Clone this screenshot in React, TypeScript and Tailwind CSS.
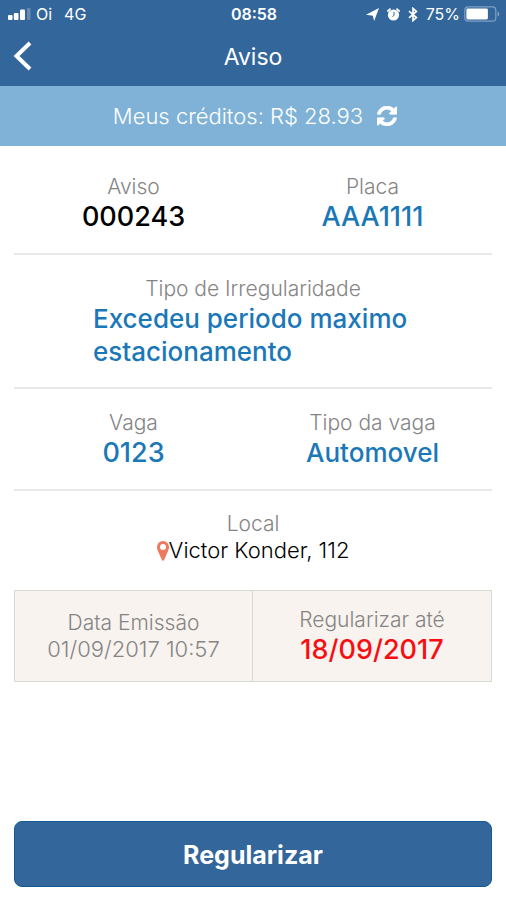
import type { ReactNode } from "react";

function SignalIcon() {
  return (
    <svg className="h-3 w-6" viewBox="0 0 24 12" fill="currentColor" aria-hidden="true">
      <rect x="0" y="7" width="4.500" height="5" rx="1" />
      <rect x="5.800" y="5" width="4.700" height="7" rx="1" />
      <rect x="12" y="1.500" width="5" height="10.500" rx="1" />
      <rect x="19" y="0" width="3.500" height="12" rx="1" opacity="0.25" />
    </svg>
  );
}

function LocationArrowIcon() {
  return (
    <svg className="h-[13px] w-[13px]" viewBox="0 0 12 12" fill="currentColor" aria-hidden="true">
      <path d="M12 0 7.500 12 6.300 7.200 0 6.200Z" />
    </svg>
  );
}

function AlarmIcon() {
  return (
    <svg className="h-[13px] w-[13px]" viewBox="0 0 13 13" aria-hidden="true">
      <circle cx="6.5" cy="7" r="5.6" fill="currentColor" />
      <path d="M.9 3 3 1.100M12.1 3 10 1.100" stroke="currentColor" strokeWidth="1.800" strokeLinecap="round" />
      <path d="M7 4v3.400L5.500 8.500" fill="none" stroke="#33669a" strokeWidth="1" />
    </svg>
  );
}

function BluetoothIcon() {
  return (
    <svg className="h-[15px] w-[10px]" viewBox="0 0 10 15" fill="none" stroke="currentColor" strokeWidth="1.700" aria-hidden="true">
      <path d="M1 4.2 8.4 10.6 5 13.6V1.4l3.4 3L1 10.8" />
    </svg>
  );
}

function BatteryIcon() {
  return (
    <svg className="h-4 w-9" viewBox="0 0 36 16" aria-hidden="true">
      <rect x=".8" y=".8" width="31" height="14.4" rx="3.4" fill="none" stroke="#7fa0c2" strokeWidth="1.2" />
      <rect x="2.4" y="2.6" width="21.500" height="10.8" rx="1.4" fill="currentColor" />
      <path d="M33.500 5.4c2.400.6 2.400 4.6 0 5.2Z" fill="#7fa0c2" />
    </svg>
  );
}

function RefreshIcon() {
  return (
    <svg className="h-5 w-5" viewBox="0 0 1536 1536" fill="currentColor" stroke="currentColor" strokeWidth="50" aria-hidden="true">
      <path d="M1511 928q0 5-1 7-64 268-268 434.500T764 1536q-146 0-282.500-55T238 1324l-129 129q-19 19-45 19t-45-19-19-45V960q0-26 19-45t45-19h448q26 0 45 19t19 45-19 45l-137 137q71 66 161 102t187 36q134 0 250-65t186-179q11-17 53-117 8-23 30-23h192q13 0 22.500 9.500t9.500 22.500zM1536 128v448q0 26-19 45t-45 19h-448q-26 0-45-19t-19-45 19-45l138-138Q969 256 768 256q-134 0-250 65T332 500q-11 17-53 117-8 23-30 23H50q-13 0-22.500-9.500T18 608v-7q65-268 270-434.500T768 0q146 0 284 55.500T1297 212l130-129q19-19 45-19t45 19 19 45z" />
    </svg>
  );
}

function PinIcon() {
  return (
    <svg className="h-5 w-3" viewBox="0 0 12 20" fill="#ec7a5f" aria-hidden="true">
      <path fillRule="evenodd" d="M6 0a6 6 0 0 1 6 6c0 2-.6 3.300-1.300 4.800L7.100 19c-.5 1-1.700 1-2.200 0L1.300 10.800C.6 9.300 0 8 0 6a6 6 0 0 1 6-6Zm0 3.100a3 3 0 1 0 0 6 3 3 0 0 0 0-6Z" />
    </svg>
  );
}

function Label({ children }: { children: ReactNode }) {
  return <dt className="text-[21px] leading-[27px] font-light text-[#858585]">{children}</dt>;
}

const numberValue = "text-[27px] leading-[33px] font-medium";
const wordValue = "text-[26px] leading-[33px] font-medium text-[#1b78b8]";

function Field({ label, value, style }: { label: string; value: string; style: string }) {
  return (
    <div className="text-center">
      <Label>{label}</Label>
      <dd className={style}>{value}</dd>
    </div>
  );
}

export default function App() {
  return (
    <div className="flex min-h-screen flex-col bg-white font-['Inter','Liberation_Sans',sans-serif]">
      <header className="bg-[#33669a] text-white">
        <div className="grid h-7 grid-cols-[1fr_auto_1fr] items-center pr-1.5 pl-2 text-[16px] leading-7">
          <div className="flex items-center gap-1">
            <SignalIcon />
            <span>Oi</span>
            <span className="ml-2">4G</span>
          </div>
          <time className="font-semibold">08:58</time>
          <div className="flex items-center justify-end gap-2">
            <LocationArrowIcon />
            <AlarmIcon />
            <BluetoothIcon />
            <div className="flex items-center gap-1">
              <span>75%</span>
              <BatteryIcon />
            </div>
          </div>
        </div>
        <div className="grid h-[58px] grid-cols-[1fr_auto_1fr] items-center px-3">
          <button type="button" aria-label="Voltar" className="justify-self-start">
            <svg className="h-8 w-5" viewBox="0 0 20 32" fill="none" stroke="currentColor" strokeWidth="4" aria-hidden="true">
              <path d="M18 2 4.500 15 18 28" />
            </svg>
          </button>
          <h1 className="text-[23px] leading-7">Aviso</h1>
        </div>
      </header>

      <div className="flex h-[60px] items-center justify-center gap-[14px] bg-[#7fb2d6] pl-1 text-[22px] font-light text-white">
        <p>Meus créditos: R$ 28.93</p>
        <button type="button" aria-label="Atualizar créditos">
          <RefreshIcon />
        </button>
      </div>

      <main className="flex grow flex-col px-[14px] pb-[13px]">
        <dl>
          <div className="grid grid-cols-2 border-b-2 border-[#e8e8e8] pt-[27px] pb-5">
            <Field label="Aviso" value="000243" style={`${numberValue} text-black`} />
            <Field label="Placa" value="AAA1111" style={`${numberValue} text-[#1b78b8]`} />
          </div>
          <div className="border-b-2 border-[#e8e8e8] pt-5 pb-[19px]">
            <div className="text-center">
              <Label>Tipo de Irregularidade</Label>
              <dd className={`mx-auto max-w-[320px] text-left ${wordValue}`}>
                Excedeu periodo maximo estacionamento
              </dd>
            </div>
          </div>
          <div className="grid grid-cols-2 border-b-2 border-[#e8e8e8] py-5">
            <Field label="Vaga" value="0123" style={`${numberValue} text-[#1b78b8]`} />
            <Field label="Tipo da vaga" value="Automovel" style={wordValue} />
          </div>
          <div className="pt-[19px] pb-[26px] text-center">
            <Label>Local</Label>
            <dd className="flex items-center justify-center text-[22px] leading-[27px] font-light text-black">
              <PinIcon />
              Victor Konder, 112
            </dd>
          </div>
          <div className="grid grid-cols-2 divide-x divide-[#d8d8d4] border border-[#d8d8d4] bg-[#f8f3ee]">
            <div className="flex flex-col justify-center text-center">
              <Label>Data Emissão</Label>
              <dd className="text-[22px] leading-[27px] font-light text-[#858585]">01/09/2017 10:57</dd>
            </div>
            <div className="py-[15px]">
              <Field label="Regularizar até" value="18/09/2017" style={`${numberValue} text-[#f80d12]`} />
            </div>
          </div>
        </dl>
        <button
          type="button"
          className="mt-auto h-[66px] w-full rounded-lg border border-[#135a94] bg-[#33669a] pt-1 text-[25px] font-bold text-white"
        >
          Regularizar
        </button>
      </main>
    </div>
  );
}
